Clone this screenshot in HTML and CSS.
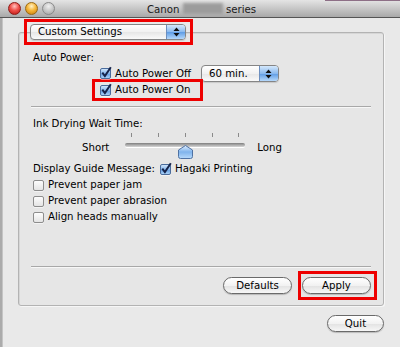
FILE: index.html
```html
<!DOCTYPE html>
<html lang="en">
<head>
  <meta charset="UTF-8">
  <title>Canon series</title>
  <link rel="stylesheet" href="styles.css">
</head>
<body>
  <div class="titlebar">
    <div class="lights">
      <span class="light red"></span>
      <span class="light amber"></span>
      <span class="light off"></span>
    </div>
    <div class="title">Canon <span class="blur"></span> series</div>
  </div>
  <div class="main">
    <div class="edge"></div>
    <div class="content">
      <div class="mark mark-top">
        <div class="popup popup-wide">
          <span class="popup-text">Custom Settings</span>
          <span class="popup-arrows"><svg width="7" height="10" viewBox="0 0 7 10"><path d="M0.5 4 L3.5 0.5 L6.5 4Z M0.5 6 L3.5 9.5 L6.5 6Z" fill="#111"/></svg></span>
        </div>
      </div>

      <div class="group">
        <div class="label tight">Auto Power:</div>
        <div class="row power-off">
          <span class="check on"><svg width="12" height="12" viewBox="0 0 12 12"><path d="M2.3 5.6 L4.9 9 L10.8 0.2" fill="none" stroke="#16234a" stroke-width="2"/></svg></span>
          <span class="check-label">Auto Power Off</span>
          <div class="popup popup-min">
            <span class="popup-text">60 min.</span>
            <span class="popup-arrows"><svg width="7" height="10" viewBox="0 0 7 10"><path d="M0.5 4 L3.5 0.5 L6.5 4Z M0.5 6 L3.5 9.5 L6.5 6Z" fill="#111"/></svg></span>
          </div>
        </div>
        <div class="mark mark-on">
          <div class="row line">
            <span class="check on"><svg width="12" height="12" viewBox="0 0 12 12"><path d="M2.3 5.6 L4.9 9 L10.8 0.2" fill="none" stroke="#16234a" stroke-width="2"/></svg></span>
            <span class="check-label">Auto Power On</span>
          </div>
        </div>

        <div class="sep sep-mid"></div>

        <div class="label ink">Ink Drying Wait Time:</div>
        <div class="slider-row">
          <span class="slider-label short">Short</span>
          <div class="slider">
            <div class="ticks"><i></i><i></i><i></i><i></i><i></i></div>
            <div class="track-area">
              <div class="track"></div>
              <svg class="knob" width="15" height="14" viewBox="0 0 15 14">
                <defs>
                  <linearGradient id="kg" x1="0" y1="0" x2="0" y2="1">
                    <stop offset="0" stop-color="#e2f0ff"/>
                    <stop offset="0.5" stop-color="#7fb3ec"/>
                    <stop offset="1" stop-color="#b8dafb"/>
                  </linearGradient>
                </defs>
                <path d="M7.5 0.5 L14.5 5 V11.5 Q14.5 13.5 12.5 13.5 H2.5 Q0.5 13.5 0.5 11.5 V5 Z" fill="url(#kg)" stroke="#4f72a3"/>
              </svg>
            </div>
          </div>
          <span class="slider-label long">Long</span>
        </div>

        <div class="row line guide">
          <span class="guide-text">Display Guide Message:</span>
          <span class="check on"><svg width="12" height="12" viewBox="0 0 12 12"><path d="M2.3 5.6 L4.9 9 L10.8 0.2" fill="none" stroke="#16234a" stroke-width="2"/></svg></span>
          <span class="check-label">Hagaki Printing</span>
        </div>
        <div class="row line">
          <span class="check"></span>
          <span class="check-label">Prevent paper jam</span>
        </div>
        <div class="row line">
          <span class="check"></span>
          <span class="check-label">Prevent paper abrasion</span>
        </div>
        <div class="row line">
          <span class="check"></span>
          <span class="check-label">Align heads manually</span>
        </div>

        <div class="sep sep-bottom"></div>

        <div class="buttons">
          <span class="btn btn-defaults">Defaults</span>
          <div class="mark mark-apply">
            <span class="btn btn-apply">Apply</span>
          </div>
        </div>
      </div>

      <div class="footer">
        <span class="btn btn-quit">Quit</span>
      </div>
    </div>
  </div>
</body>
</html>
```

FILE: styles.css
```css
body { margin: 0; background: #e9e9e9; font-family: "DejaVu Sans", sans-serif; font-size: 10.2px; color: #000; width: 400px; height: 347px; overflow: hidden; }

.titlebar { height: 17px; border-bottom: 1px solid #555; display: grid; grid-template-columns: 1fr auto 1fr; align-items: center;
  background: linear-gradient(to right, transparent 325px, #8d6f86 325px) top / 100% 1px no-repeat, linear-gradient(#e4e4e4, #a9a9a9); }
.lights { display: flex; gap: 4px; padding-left: 8px; }
.light { width: 13px; height: 13px; border-radius: 50%; box-sizing: border-box; }
.light.red { background: radial-gradient(circle at 50% 30%, #ffc4c0 0, #f0504a 45%, #b8120e 100%); border: 1px solid #8e1c18; }
.light.amber { background: radial-gradient(circle at 50% 30%, #fff2c8 0, #f6b73a 45%, #c47a08 100%); border: 1px solid #9a6a14; }
.light.off { background: radial-gradient(circle at 50% 30%, #f0f0f0 0, #c4c4c4 55%, #a0a0a0 100%); border: 1px solid #8a8a8a; }
.title { line-height: 15px; padding-top: 2px; padding-left: 3px; color: #1a1a1a; white-space: nowrap; }
.blur { display: inline-block; width: 40px; height: 11px; vertical-align: -1px; background: #9c9c9c; filter: blur(1.5px); }

.main { display: flex; height: 329px; }
.edge { width: 3px; background: #ababab; border-right: 1px solid #c4c4c4; box-sizing: border-box; }
.content { flex: 1; display: flex; flex-direction: column; padding-right: 16px; }

.mark { border: 3px solid #ee0000; }
.mark-top { position: relative; z-index: 1; width: fit-content; margin: 1px 0 0 21px; padding: 2px 4px 2px 3px; }

.popup { display: flex; align-items: stretch; box-sizing: border-box; border: 1px solid #858585; border-radius: 4px; overflow: hidden;
  background: linear-gradient(#ffffff, #f1f1f1 50%, #e6e6e6 51%, #fafafa); box-shadow: 0 1px 1px #0002; }
.popup-wide { width: 156px; height: 16px; }
.popup-min { width: 78px; height: 17px; margin-left: 10px; }
.popup-text { flex: 1; padding-left: 7px; line-height: 14px; }
.popup-min .popup-text { line-height: 15px; }
.popup-arrows { width: 18px; display: flex; align-items: center; justify-content: center; border-left: 1px solid #6d8fbf;
  background: linear-gradient(#d4e8fc, #8ab9ee 50%, #5d9be4 51%, #b5d8fb); }

.group { margin: -13px 0 0 15px; padding: 18px 12px 5px 14px; border: 1px solid #b3b3b3; border-radius: 3px;
  background: #e6e6e6; box-shadow: inset 1px 1px 0 #d6d6d6, 1px 1px 0 #f6f6f6; display: flex; flex-direction: column; }

.label.tight { line-height: 14px; }
.label.ink { line-height: 15px; margin-top: 8px; }

.row { display: flex; align-items: center; }
.row.line { height: 16px; line-height: 16px; }
.power-off { height: 17px; margin-left: 67px; }
.mark-on { width: fit-content; margin: -3px 0 0 59px; padding: 0 10px 0 5px; }

.check { width: 11px; height: 11px; box-sizing: border-box; border: 1px solid #8d8d8d; border-radius: 2px; flex: none;
  background: linear-gradient(#fdfdfd, #e4e4e4); box-shadow: 0 1px 0 #fff8; position: relative; }
.check.on { border-color: #4a6c9c; background: linear-gradient(#cfe4fa, #86b6ec 50%, #5f9ae0 51%, #a9d1f8); }
.check svg { position: absolute; left: -1px; top: -2px; overflow: visible; }
.check-label { margin-left: 4px; white-space: nowrap; }
.guide-text { margin-right: 5px; }
.guide { margin-top: 2px; }

.sep { border-top: 1px solid #a8a8a8; border-bottom: 1px solid #f7f7f7; margin-left: -2px; }
.sep-mid { margin-top: 5px; }
.sep-bottom { margin-top: 41px; }

.slider-row { display: flex; align-items: flex-start; margin-top: 2px; }
.slider-label { line-height: 14px; margin-top: 8px; }
.short { margin-left: 49px; }
.long { margin-left: 12px; }
.slider { width: 120px; margin-left: 16px; }
.ticks { height: 4px; display: flex; justify-content: space-between; padding: 0 6px; }
.ticks i { width: 1px; background: #8a8a8a; }
.track-area { position: relative; height: 16px; }
.track { margin-top: 6px; height: 4px; border-radius: 2px; background: linear-gradient(#7d7d7d, #b4b4b4 60%, #d6d6d6); box-shadow: 0 1px 0 #fff; }
.knob { position: absolute; left: 53px; top: 2px; }

.buttons { display: flex; justify-content: flex-end; align-items: center; margin-top: 3px; }
.btn { display: inline-flex; align-items: center; justify-content: center; height: 17px; box-sizing: border-box; border: 1px solid #6a6a6a; border-radius: 9px;
  background: linear-gradient(#ffffff, #f2f2f2 50%, #e2e2e2 51%, #f7f7f7); box-shadow: 0 1px 1px #0003; }
.btn-defaults { width: 69px; margin-right: 6px; }
.mark-apply { display: flex; padding: 3px 3px 3px 1px; margin-right: -6px; }
.btn-apply { width: 69px; }
.footer { display: flex; justify-content: flex-end; margin-top: 9px; }
.btn-quit { width: 57px; }
```
